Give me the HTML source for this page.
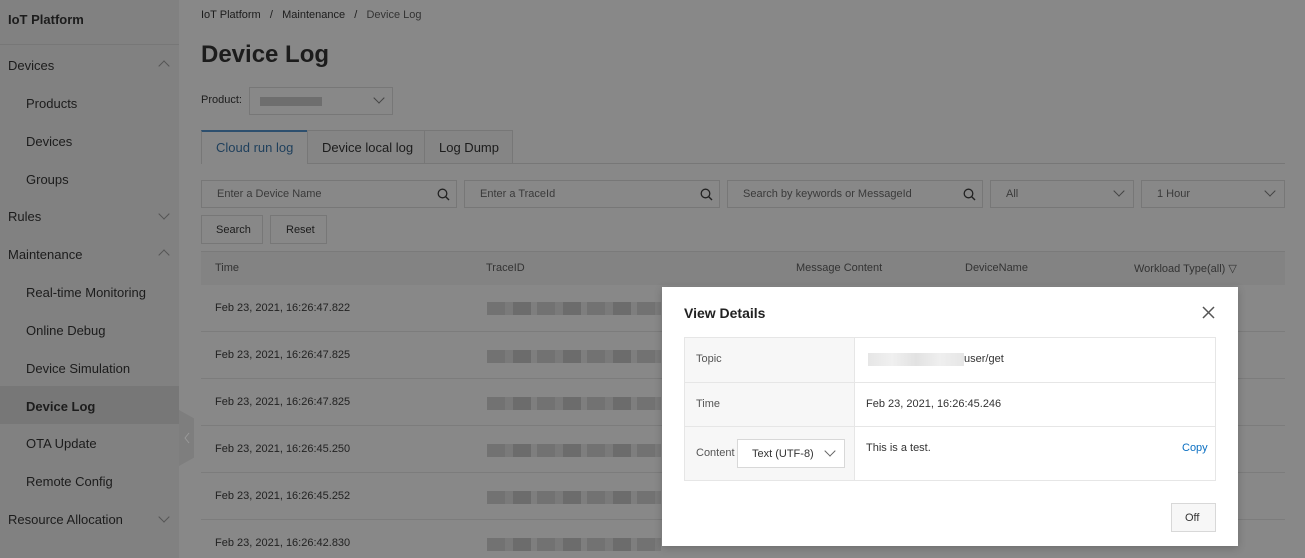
<!DOCTYPE html>
<html><head><meta charset="utf-8"><style>
*{margin:0;padding:0;box-sizing:border-box}
body{width:1305px;height:558px;overflow:hidden;background:#888;font-family:"Liberation Sans",sans-serif;color:#1c1c1c;position:relative}
.a{position:absolute;white-space:nowrap}
#side{position:absolute;left:0;top:0;width:179px;height:558px;background:#818181}
.si{position:absolute;left:26px;font-size:13px}
.sh{position:absolute;left:8px;font-size:13px}
.chev{position:absolute;left:160px;width:8px;height:8px;border-left:1px solid #555;border-top:1px solid #555}
.box{position:absolute;border:1px solid #777;background:#888}
.ph{position:absolute;font-size:11px;color:#3a3a3a}
.row{position:absolute;left:201px;width:1084px;height:1px;background:#7c7c7c}
.t{position:absolute;left:215px;font-size:11px;color:#222}
.blur{position:absolute;left:487px;width:174px;height:13px;background:repeating-linear-gradient(90deg,#727272 0 18px,#7a7a7a 18px 26px,#6c6c6c 26px 44px,#7e7e7e 44px 50px)}
.sv{position:absolute;width:8px;height:8px;border-right:1px solid #444;border-bottom:1px solid #444;transform:rotate(45deg)}
.mg{position:absolute;top:7px;width:13px;height:13px}
</style></head><body>
<div id="side">
<div class="sh" style="top:12px;font-weight:bold">IoT Platform</div>
<div style="position:absolute;left:0;top:44px;width:179px;height:1px;background:#777"></div>
<div class="sh" style="top:58px">Devices</div><div class="chev" style="top:62px;transform:rotate(45deg)"></div>
<div class="si" style="top:96px">Products</div>
<div class="si" style="top:134px">Devices</div>
<div class="si" style="top:172px">Groups</div>
<div class="sh" style="top:209px">Rules</div><div class="chev" style="top:210px;transform:rotate(225deg)"></div>
<div class="sh" style="top:247px">Maintenance</div><div class="chev" style="top:251px;transform:rotate(45deg)"></div>
<div class="si" style="top:285px">Real-time Monitoring</div>
<div class="si" style="top:323px">Online Debug</div>
<div class="si" style="top:361px">Device Simulation</div>
<div style="position:absolute;left:0;top:386px;width:179px;height:38px;background:#777"></div>
<div class="si" style="top:399px;font-weight:bold">Device Log</div>
<div class="si" style="top:436px">OTA Update</div>
<div class="si" style="top:474px">Remote Config</div>
<div class="sh" style="top:512px">Resource Allocation</div><div class="chev" style="top:513px;transform:rotate(225deg)"></div>
</div>
<div style="position:absolute;left:179px;top:410px;width:15px;height:56px;background:#7e7e7e;clip-path:polygon(0 0,100% 15%,100% 85%,0 100%)"></div>
<svg class="a" style="left:183px;top:432px" width="8" height="12"><path d="M6 1L2 6L6 11" fill="none" stroke="#999" stroke-width="1"/></svg>
<div class="a" style="left:201px;top:9px;font-size:11px">IoT Platform &nbsp;&nbsp;/&nbsp;&nbsp; Maintenance &nbsp;&nbsp;/&nbsp;&nbsp; <span style="color:#333">Device Log</span></div>
<div class="a" style="left:201px;top:41px;font-size:24px;font-weight:bold">Device Log</div>
<div class="a" style="left:201px;top:94px;font-size:11px">Product:</div>
<div class="box" style="left:249px;top:87px;width:144px;height:28px"><div style="position:absolute;left:10px;top:9px;width:62px;height:9px;background:#6e6e6e"></div><div class="sv" style="left:125px;top:6px"></div></div>
<div style="position:absolute;left:201px;top:163px;width:1084px;height:1px;background:#777"></div>
<div class="box" style="left:201px;top:130px;width:107px;height:34px;border-top:2px solid #2d4f6e;border-bottom:none"></div>
<div class="a" style="left:216px;top:140px;font-size:13px;color:#1e3f5c">Cloud run log</div>
<div class="box" style="left:307px;top:130px;width:118px;height:34px;background:#858585"></div>
<div class="a" style="left:322px;top:140px;font-size:13px">Device local log</div>
<div class="box" style="left:424px;top:130px;width:89px;height:34px;background:#858585"></div>
<div class="a" style="left:439px;top:140px;font-size:13px">Log Dump</div>
<div class="box" style="left:201px;top:180px;width:256px;height:28px"><span class="ph" style="left:15px;top:7px">Enter a Device Name</span><svg class="mg" style="left:235px" viewBox="0 0 13 13"><circle cx="5.5" cy="5.5" r="4.3" fill="none" stroke="#222" stroke-width="1.3"/><path d="M8.6 8.6L12 12" stroke="#222" stroke-width="1.4"/></svg></div>
<div class="box" style="left:464px;top:180px;width:256px;height:28px"><span class="ph" style="left:15px;top:7px">Enter a TraceId</span><svg class="mg" style="left:235px" viewBox="0 0 13 13"><circle cx="5.5" cy="5.5" r="4.3" fill="none" stroke="#222" stroke-width="1.3"/><path d="M8.6 8.6L12 12" stroke="#222" stroke-width="1.4"/></svg></div>
<div class="box" style="left:727px;top:180px;width:256px;height:28px"><span class="ph" style="left:15px;top:7px">Search by keywords or MessageId</span><svg class="mg" style="left:235px" viewBox="0 0 13 13"><circle cx="5.5" cy="5.5" r="4.3" fill="none" stroke="#222" stroke-width="1.3"/><path d="M8.6 8.6L12 12" stroke="#222" stroke-width="1.4"/></svg></div>
<div class="box" style="left:990px;top:180px;width:144px;height:28px"><span class="ph" style="left:15px;top:7px">All</span><div class="sv" style="left:124px;top:6px"></div></div>
<div class="box" style="left:1141px;top:180px;width:144px;height:28px"><span class="ph" style="left:15px;top:7px">1 Hour</span><div class="sv" style="left:124px;top:6px"></div></div>
<div class="box" style="left:201px;top:215px;width:62px;height:29px"><span class="ph" style="left:14px;top:8px;color:#1c1c1c">Search</span></div>
<div class="box" style="left:270px;top:215px;width:57px;height:29px"><span class="ph" style="left:15px;top:8px;color:#1c1c1c">Reset</span></div>
<div style="position:absolute;left:201px;top:251px;width:1084px;height:34px;background:#838383;border-top:1px solid #7a7a7a"></div>
<div class="t" style="top:262px;color:#333">Time</div>
<div class="t" style="left:486px;top:262px;color:#333">TraceID</div>
<div class="t" style="left:796px;top:262px;color:#333">Message Content</div>
<div class="t" style="left:965px;top:262px;color:#333">DeviceName</div>
<div class="t" style="left:1134px;top:262px;color:#333">Workload Type(all) &#9661;</div>
<div class="row" style="top:331px"></div><div class="row" style="top:378px"></div><div class="row" style="top:425px"></div><div class="row" style="top:472px"></div><div class="row" style="top:519px"></div>
<div class="t" style="top:302px">Feb 23, 2021, 16:26:47.822</div><div class="blur" style="top:302px"></div>
<div class="t" style="top:349px">Feb 23, 2021, 16:26:47.825</div><div class="blur" style="top:350px"></div>
<div class="t" style="top:396px">Feb 23, 2021, 16:26:47.825</div><div class="blur" style="top:397px"></div>
<div class="t" style="top:443px">Feb 23, 2021, 16:26:45.250</div><div class="blur" style="top:444px"></div>
<div class="t" style="top:490px">Feb 23, 2021, 16:26:45.252</div><div class="blur" style="top:491px"></div>
<div class="t" style="top:537px">Feb 23, 2021, 16:26:42.830</div><div class="blur" style="top:538px"></div>

<div style="position:absolute;left:662px;top:287px;width:576px;height:259px;background:#fff;box-shadow:0 2px 8px rgba(0,0,0,.2)">
<div class="a" style="left:22px;top:18px;font-size:14px;font-weight:bold;color:#222">View Details</div>
<svg class="a" style="left:540px;top:19px" width="13" height="13"><path d="M1 1L12 12M12 1L1 12" stroke="#555" stroke-width="1.5"/></svg>
<div style="position:absolute;left:22px;top:50px;width:532px;height:144px;border:1px solid #e6e6e6">
<div style="position:absolute;left:0;top:0;width:170px;height:142px;background:#f7f7f7;border-right:1px solid #e6e6e6"></div>
<div style="position:absolute;left:0;top:44px;width:530px;height:1px;background:#e6e6e6"></div>
<div style="position:absolute;left:0;top:88px;width:530px;height:1px;background:#e6e6e6"></div>
<div class="a" style="left:11px;top:15px;font-size:11px;color:#555">Topic</div>
<div style="position:absolute;left:183px;top:15px;width:96px;height:13px;background:linear-gradient(90deg,#e6e6e6,#f0f0f0,#e2e2e2,#efefef,#e6e6e6)"></div>
<div class="a" style="left:279px;top:15px;font-size:11px;color:#333">user/get</div>
<div class="a" style="left:11px;top:60px;font-size:11px;color:#555">Time</div>
<div class="a" style="left:181px;top:60px;font-size:11px;color:#333">Feb 23, 2021, 16:26:45.246</div>
<div class="a" style="left:11px;top:109px;font-size:11px;color:#555">Content</div>
<div style="position:absolute;left:52px;top:101px;width:108px;height:29px;border:1px solid #d8d8d8;background:#fff"><span class="a" style="left:14px;top:8px;font-size:11px;color:#333">Text (UTF-8)</span><div class="sv" style="left:88px;top:7px;border-color:#666"></div></div>
<div class="a" style="left:181px;top:104px;font-size:11px;color:#333">This is a test.</div>
<div class="a" style="left:497px;top:104px;font-size:11px;color:#0a6fc2">Copy</div>
</div>
<div style="position:absolute;left:509px;top:216px;width:45px;height:29px;border:1px solid #d8d8d8;background:#f7f7f7"><span class="a" style="left:13px;top:8px;font-size:11px;color:#333">Off</span></div>
</div>
</body></html>
